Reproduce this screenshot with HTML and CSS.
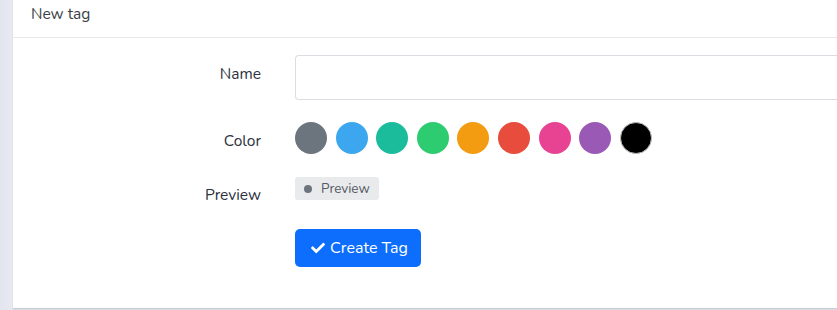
FILE: index.html
```html
<!DOCTYPE html>
<html>
<head>
<meta charset="utf-8">
<link rel="stylesheet" href="styles.css">
</head>
<body>
<div class="page">
  <div class="card">
    <div class="card-header">New tag</div>
    <div class="card-body">
      <div class="row row-name">
        <label class="label">Name</label>
        <div class="field"><input class="input" type="text"></div>
      </div>
      <div class="row row-color">
        <label class="label">Color</label>
        <div class="swatches">
          <span class="swatch c-gray"></span>
          <span class="swatch c-blue"></span>
          <span class="swatch c-teal"></span>
          <span class="swatch c-green"></span>
          <span class="swatch c-orange"></span>
          <span class="swatch c-red"></span>
          <span class="swatch c-pink"></span>
          <span class="swatch c-purple"></span>
          <span class="swatch c-black"></span>
        </div>
      </div>
      <div class="row row-preview">
        <label class="label">Preview</label>
        <div class="field"><span class="badge"><span class="dot"></span>Preview</span></div>
      </div>
      <div class="row row-submit">
        <span></span>
        <div class="field">
          <button class="btn" type="button"><svg class="check" viewBox="0 0 512 512"><path fill="currentColor" d="M173.898 439.404l-166.4-166.4c-9.997-9.997-9.997-26.206 0-36.204l36.203-36.204c9.997-9.998 26.207-9.998 36.204 0L192 312.69 432.095 72.596c9.997-9.997 26.207-9.997 36.204 0l36.203 36.204c9.997 9.997 9.997 26.206 0 36.204l-294.4 294.401c-9.998 9.997-26.207 9.997-36.204-.001z"/></svg>Create Tag</button>
        </div>
      </div>
    </div>
  </div>
</div>
</body>
</html>
```
FILE: styles.css
```css
html, body {
  margin: 0;
  padding: 0;
}
body {
  background: #dddfe5;
  font-family: "Nunito", "Lato", "Open Sans", sans-serif;
  color: #2a2f3a;
  width: 837px;
  height: 310px;
  overflow: hidden;
}
.page {
  background: linear-gradient(to right, #e2e5ee 0, #e8eaf1 12px, #dddfe5 13px);
  padding-left: 13px;
  height: 310px;
}
.card {
  background: #fff;
  height: 308px;
  box-sizing: border-box;
  box-shadow: 0 1px 1px rgba(0,0,0,0.08);
}
.card-header {
  height: 38px;
  box-sizing: border-box;
  border-bottom: 1px solid #e8e9ec;
  padding: 4px 18px 0;
  font-size: 15.5px;
  line-height: 20px;
  color: #3a3f47;
}
.card-body {
  padding-top: 17px;
}
.row {
  display: grid;
  grid-template-columns: 248px 1fr;
  column-gap: 34px;
  align-items: start;
}
.field {
  display: flex;
  align-items: flex-start;
}
.label {
  text-align: right;
  font-size: 15.5px;
  line-height: 24px;
  padding-top: 7px;
  color: #2c3140;
}
.row-name { margin-bottom: 22px; }
.row-color { margin-bottom: 22px; }
.row-preview { height: 25px; margin-bottom: 29px; }
.input {
  display: block;
  width: 100%;
  height: 45px;
  box-sizing: border-box;
  border: 1px solid #dcdde2;
  border-right: none;
  border-radius: 4px 0 0 4px;
  outline: none;
  margin: 0;
  font: inherit;
}
.swatches {
  display: flex;
  gap: 8.6px;
  height: 32px;
}
.swatch {
  width: 32px;
  height: 32px;
  border-radius: 50%;
  box-sizing: border-box;
}
.c-gray { background: #6c757d; }
.c-blue { background: #3ca7ee; }
.c-teal { background: #1abc9c; }
.c-green { background: #2ecc71; }
.c-orange { background: #f39c12; }
.c-red { background: #e74c3c; }
.c-pink { background: #e84393; }
.c-purple { background: #9b59b6; }
.c-black { background: #000; border: 1px solid #bbb; }
.row-preview .field { padding-top: 1px; }
.row-preview { margin-bottom: 28px; }
.badge {
  display: inline-flex;
  align-items: center;
  height: 23px;
  box-sizing: border-box;
  padding: 0 9px;
  background: #e9eaec;
  border-radius: 3px;
  font-size: 13.5px;
  color: #545b64;
}
.dot {
  width: 8px;
  height: 8px;
  border-radius: 50%;
  background: #6c757d;
  margin-right: 9px;
}
.btn {
  display: inline-flex;
  align-items: center;
  height: 38px;
  width: 126px;
  box-sizing: border-box;
  padding: 0 0 0 16px;
  background: #0d6efd;
  color: #fff;
  border: none;
  border-radius: 5px;
  font-family: inherit;
  font-size: 16px;
  cursor: pointer;
}
.check {
  width: 14px;
  height: 14px;
  margin-right: 5px;
}
```
